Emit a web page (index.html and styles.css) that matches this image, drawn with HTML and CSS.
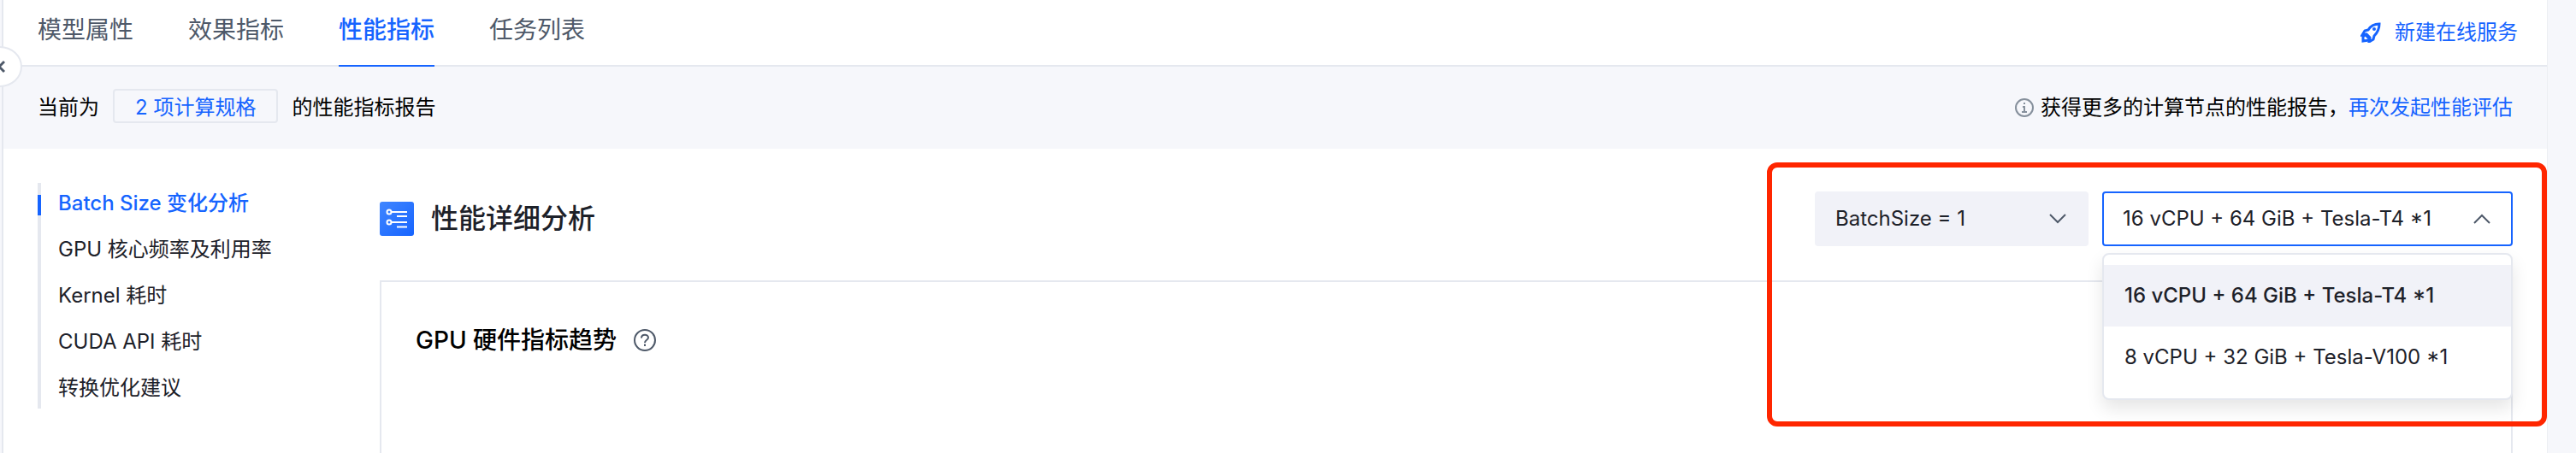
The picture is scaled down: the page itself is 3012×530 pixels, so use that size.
FILE: index.html
```
<!DOCTYPE html>
<html lang="zh-CN">
<head>
  <meta charset="UTF-8">
  <title>性能指标</title>
  <link rel="stylesheet" href="styles.css">
</head>
<body>

  <main class="page">
    <button class="collapse" aria-label="收起">
      <svg width="12" height="16" viewBox="0 0 12 16"><path d="M11 2 5 8l6 6" /></svg>
    </button>

    <header class="header">
      <nav class="tabs">
        <a href="#attr">模型属性</a>
        <a href="#effect">效果指标</a>
        <a href="#perf" class="active">性能指标</a>
        <a href="#tasks">任务列表</a>
      </nav>
      <a href="#new" class="new-service">
        <svg width="24" height="24" viewBox="0 0 24 24">
          <path d="M22 2c-6 0-10 2-13 7l-4 1-3 5 5-1 4 4-1 5 5-3 1-4c4-4 6-8 6-14z" />
          <path d="M6 14l-3 3v5l7-1M6 15l4 4" />
          <circle cx="16" cy="8" r="1" stroke-width="2" />
        </svg>
        新建在线服务
      </a>
    </header>

    <div class="notice">
      <p>当前为<button class="spec">2 项计算规格</button>的性能指标报告</p>
      <p class="more">
        <svg width="22" height="22" viewBox="0 0 22 22">
          <circle cx="11" cy="11" r="10" />
          <path d="M11 5v2M9 10h2v6M8 16h6" />
        </svg>
        <span>获得更多的计算节点的性能报告，<a href="#again">再次发起性能评估</a></span>
      </p>
    </div>

    <div class="content">
      <nav class="anchor">
        <a href="#batch" class="active">Batch Size 变化分析</a>
        <a href="#gpu">GPU 核心频率及利用率</a>
        <a href="#kernel">Kernel 耗时</a>
        <a href="#cuda">CUDA API 耗时</a>
        <a href="#advice">转换优化建议</a>
      </nav>

      <section class="detail">
        <div class="detail-head">
          <h2>
            <svg width="40" height="40" viewBox="0 0 40 40">
              <defs>
                <linearGradient id="blue" x1="0" y1="0" x2="1" y2="1">
                  <stop offset="0" stop-color="#4086ff" />
                  <stop offset="1" stop-color="#1664ff" />
                </linearGradient>
              </defs>
              <rect width="40" height="40" rx="3" fill="url(#blue)" stroke="none" />
              <path d="M14 12h18M20 17h12M14 24h18M20 29.500h12" />
              <circle cx="11" cy="12" r="2.500" />
              <circle cx="11" cy="24" r="2.500" />
            </svg>
            性能详细分析
          </h2>
          <div class="filters">
            <button class="select batch">BatchSize = 1
              <svg width="20" height="12" viewBox="0 0 20 12"><path d="M1 1l9 9 9-9" /></svg>
            </button>
            <div class="dropdown">
              <button class="select open" aria-expanded="true">16 vCPU + 64 GiB + Tesla-T4 *1
                <svg width="20" height="12" viewBox="0 0 20 12"><path d="M1 11l9-9 9 9" /></svg>
              </button>
              <ul class="menu" role="listbox">
                <li role="option" class="selected" aria-selected="true">16 vCPU + 64 GiB + Tesla-T4 *1</li>
                <li role="option">8 vCPU + 32 GiB + Tesla-V100 *1</li>
              </ul>
            </div>
            <div class="highlight"></div>
          </div>
        </div>

        <div class="card">
          <h3>
            GPU 硬件指标趋势
            <svg width="26" height="26" viewBox="0 0 26 26">
              <circle cx="13" cy="13" r="12" />
              <path d="M9 10.500C9 5.500 17 5.500 17 10c0 3-4 2.500-4 6M13 17.500v2.500" />
            </svg>
          </h3>
        </div>
      </section>
    </div>
  </main>

</body>
</html>
```

FILE: styles.css
```
* {
  box-sizing: border-box;
}
body {
  margin: 0;
  background: #f6f7fb;
  font-family: Inter, "Noto Sans CJK SC", sans-serif;
  font-size: 24px;
  line-height: 36px;
  color: #1d2129;
  overflow: hidden;
}
a {
  color: #1664ff;
  text-decoration: none;
}
button {
  font: inherit;
  cursor: pointer;
}
svg {
  flex: none;
  fill: none;
  stroke: currentColor;
  stroke-width: 2;
}
p, h2, h3, ul {
  margin: 0;
  padding: 0;
}
.page {
  position: relative;
  display: flex;
  flex-direction: column;
  min-height: 100vh;
  margin: 0 33px 0 2px;
  border-left: 2px solid #e5e8ef;
  border-right: 1px solid #eceef3;
  background: #fff;
}
.collapse {
  position: absolute;
  left: -30px;
  top: 54px;
  display: flex;
  align-items: center;
  justify-content: center;
  width: 52px;
  height: 48px;
  padding: 0;
  border: 2px solid #e5e8ef;
  border-radius: 50%;
  background: #fff;
  color: #4e5969;
}
.collapse svg {
  stroke-width: 3;
}

/* header */
.header {
  display: flex;
  justify-content: space-between;
  height: 78px;
  padding: 0 34px 0 40px;
  border-bottom: 2px solid #e5e8ef;
}
.tabs {
  display: flex;
  gap: 64px;
  font-size: 28px;
}
.tabs a {
  height: 78px;
  line-height: 70px;
  color: #4e5969;
}
.tabs .active {
  color: #1664ff;
  font-weight: 500;
  border-bottom: 2px solid #1664ff;
}
.new-service {
  display: flex;
  align-items: center;
  gap: 16px;
}
.new-service svg {
  stroke-width: 3;
}

/* notice */
.notice {
  display: flex;
  align-items: center;
  justify-content: space-between;
  height: 96px;
  padding: 0 40px;
  background: #f6f7fb;
  color: #000;
}
.notice p {
  display: flex;
  align-items: center;
}
.spec {
  height: 40px;
  margin: 0 16px 4px;
  padding: 2px 24px 0;
  border: 2px solid #e5e8ef;
  border-radius: 4px;
  background: none;
  color: #1664ff;
  line-height: 36px;
}
.more {
  gap: 8px;
}
.more svg {
  color: #86909c;
}

/* content */
.content {
  flex: 1;
  display: flex;
  padding: 40px 40px 0;
}
.anchor {
  display: flex;
  flex-direction: column;
  gap: 18px;
  width: 400px;
  height: 264px;
  padding-top: 6px;
  border-left: 4px solid #e5e8ef;
}
.anchor a {
  position: relative;
  padding-left: 20px;
  color: #1d2129;
}
.anchor .active {
  color: #1664ff;
  font-weight: 500;
}
.anchor .active::before {
  content: "";
  position: absolute;
  left: -4px;
  top: 8px;
  width: 4px;
  height: 24px;
  background: #1664ff;
}
.detail {
  flex: 1;
  display: flex;
  flex-direction: column;
}
.detail-head {
  display: flex;
  align-items: center;
  justify-content: space-between;
  height: 84px;
  margin-bottom: 30px;
}
h2 {
  display: flex;
  align-items: center;
  gap: 20px;
  font-size: 32px;
  font-weight: 500;
}
h2 svg {
  stroke: #fff;
}
.filters {
  position: relative;
  display: flex;
  gap: 16px;
}
.select {
  display: flex;
  align-items: center;
  justify-content: space-between;
  width: 480px;
  height: 64px;
  padding: 0 24px 0 22px;
  border: 2px solid #f1f2f8;
  border-radius: 4px;
  background: #f1f2f8;
  color: #1d2129;
}
.select svg {
  color: #4e5969;
}
.batch {
  width: 320px;
}
.open {
  border-color: #1664ff;
  background: #fff;
}
.dropdown {
  position: relative;
}
.menu {
  position: absolute;
  z-index: 1;
  top: 72px;
  left: 0;
  right: 0;
  height: 172px;
  padding: 12px 0;
  border: 2px solid #e5e8ef;
  border-radius: 8px;
  background: #fff;
  box-shadow: 0 10px 20px rgba(0, 0, 0, 0.1);
  list-style: none;
}
.menu li {
  padding: 0 24px;
  line-height: 72px;
}
.menu .selected {
  background: #f1f2f8;
  font-weight: 500;
}
/* red frame round the two filters */
.highlight {
  position: absolute;
  z-index: 2;
  top: -34px;
  left: -56px;
  right: -40px;
  height: 309px;
  border: 6px solid #ff2600;
  border-radius: 12px;
  pointer-events: none;
}
.card {
  flex: 1;
  padding: 50px 40px;
  border: 2px solid #e5e8ef;
  border-bottom: 0;
}
h3 {
  display: flex;
  align-items: center;
  gap: 20px;
  font-size: 28px;
  font-weight: 500;
  color: #000;
}
h3 svg {
  color: #4e5969;
}
```
